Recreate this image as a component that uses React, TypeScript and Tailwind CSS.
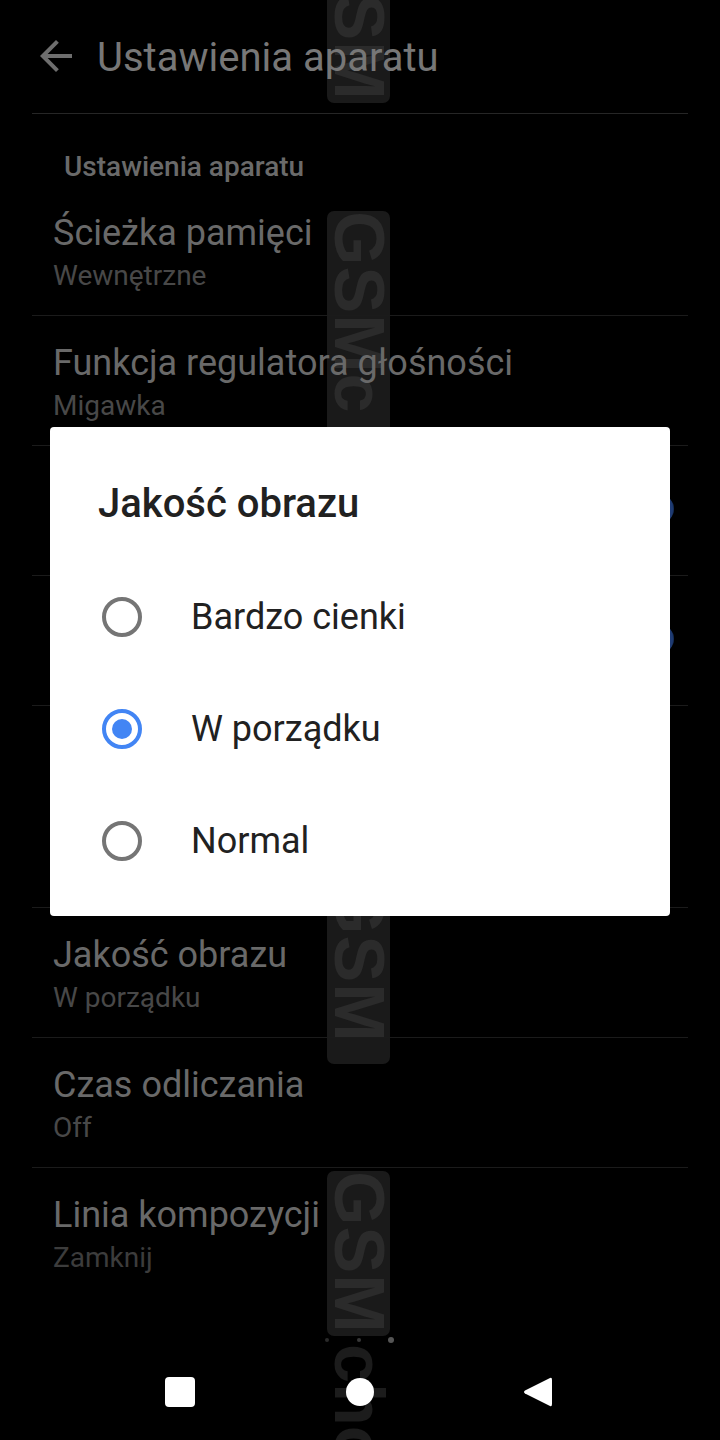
import { useState } from "react";

type Item = { title: string; sub: string; toggle?: boolean; faded?: boolean };

const topRows: Item[] = [
  { title: "Ścieżka pamięci", sub: "Wewnętrzne" },
  { title: "Funkcja regulatora głośności", sub: "Migawka" },
  { title: "Dźwięk migawki", sub: "Włączony", toggle: true },
  { title: "Lokalizacja", sub: "Zapisz lokalizację zdjęć", toggle: true },
];

const bottomRows: Item[] = [
  { title: "Jakość obrazu", sub: "W porządku" },
  { title: "Czas odliczania", sub: "Off" },
  { title: "Linia kompozycji", sub: "Zamknij", faded: true },
];

const options = ["Bardzo cienki", "W porządku", "Normal"];

function Row({ item, last }: { item: Item; last?: boolean }) {
  return (
    <div
      className={`h-[130px] shrink-0 mx-[32px] pl-[21px] pt-[27px] flex items-start justify-between ${
        last ? "" : "border-b border-[#1b1b1b]"
      }`}
    >
      <div className="flex flex-col">
        <div className="text-[36px] leading-[40px] text-[#696969]">{item.title}</div>
        <div
          className={`mt-[7px] text-[28px] leading-[32px] ${
            item.faded ? "text-[#3c3c3c]" : "text-[#484848]"
          }`}
        >
          {item.sub}
        </div>
      </div>
      {item.toggle && (
        <div className="relative mt-[22px] mr-[14px] w-[52px] h-[28px] rounded-full bg-[#17305c]">
          <div className="absolute right-[1px] top-[-4px] w-[36px] h-[36px] rounded-full bg-[#1f3b73]" />
        </div>
      )}
    </div>
  );
}

function Stamp({ top, height, text }: { top: number; height: number; text: string }) {
  return (
    <div
      className="absolute left-[327px] w-[63px] rounded-[7px] bg-[#1a1a1a] flex justify-center overflow-hidden"
      style={{ top, height }}
    >
      <span
        className="[writing-mode:vertical-rl] text-[70px] leading-[63px] font-bold text-[#2b2b2b] tracking-[1px]"
        style={{ fontFamily: '"Liberation Sans", Arial, sans-serif' }}
      >
        {text}
      </span>
    </div>
  );
}

function Radio({ checked }: { checked: boolean }) {
  return (
    <div
      className={`w-[40px] h-[40px] rounded-full border-[4px] flex items-center justify-center ${
        checked ? "border-[#4285f4]" : "border-[#757575]"
      }`}
    >
      {checked && <div className="w-[20px] h-[20px] rounded-full bg-[#4285f4]" />}
    </div>
  );
}

export default function App() {
  const [selected, setSelected] = useState(1);

  return (
    <div
      className="relative w-full h-[1440px] bg-black overflow-hidden flex flex-col"
      style={{ fontFamily: 'Roboto, "Noto Sans", sans-serif' }}
    >
      {/* watermark */}
      <Stamp top={-62} height={165} text="GSM" />
      <Stamp top={211} height={230} text="GSMc" />
      <Stamp top={880} height={184} text="GSM" />
      <Stamp top={1171} height={165} text="GSM" />
      <div className="absolute left-[325px] top-[1338px] w-[4px] h-[4px] rounded-full bg-[#2a2a2a]" />
      <div className="absolute left-[357px] top-[1338px] w-[4px] h-[4px] rounded-full bg-[#383838]" />
      <div className="absolute left-[388px] top-[1337px] w-[6px] h-[6px] rounded-full bg-[#555]" />
      <div className="absolute left-[327px] top-[1344px] w-[63px] flex justify-center">
        <span
          className="[writing-mode:vertical-rl] text-[70px] leading-[63px] font-bold text-[#1c1c1c]"
          style={{ fontFamily: '"Liberation Sans", Arial, sans-serif' }}
        >
          cho
        </span>
      </div>

      {/* settings page (dimmed) */}
      <div className="relative flex flex-col flex-1">
        <div className="h-[114px] shrink-0 mx-[32px] border-b border-[#262626] flex items-start">
          <svg width="48" height="48" viewBox="0 0 24 24" className="mt-[32px] shrink-0">
            <path
              fill="#6e6e6e"
              d="M20 11H7.83l5.59-5.59L12 4l-8 8 8 8 1.41-1.41L7.83 13H20v-2z"
            />
          </svg>
          <div className="ml-[17px] mt-[34px] text-[40px] leading-[48px] text-[#777777]">
            Ustawienia aparatu
          </div>
        </div>
        <div className="h-[72px] shrink-0 pt-[37px] pl-[64px] text-[28px] leading-[32px] font-medium text-[#6a6a6a]">
          Ustawienia aparatu
        </div>
        {topRows.map((r) => (
          <Row key={r.title} item={r} />
        ))}
        <div className="h-[202px] shrink-0 mx-[32px] border-b border-[#1b1b1b]" />
        {bottomRows.map((r, i) => (
          <Row key={r.title} item={r} last={i === bottomRows.length - 1} />
        ))}
      </div>

      {/* navigation bar */}
      <div className="relative h-[96px] shrink-0 flex items-center">
        <div className="ml-[165px] w-[30px] h-[30px] rounded-[4px] bg-white" />
        <div className="ml-[151px] w-[28px] h-[28px] rounded-full bg-white" />
        <svg className="ml-[147px]" width="34" height="36" viewBox="0 0 34 36">
          <path
            d="M29 4 Q31 3 31 6 L31 30 Q31 33 29 32 L4 19.5 Q2 18 4 16.5 Z"
            fill="#ffffff"
          />
        </svg>
      </div>

      {/* dialog */}
      <div className="absolute left-[50px] top-[427px] w-[620px] h-[489px] bg-white rounded-[4px] pt-[53px]">
        <div className="pl-[48px] text-[40px] leading-[48px] font-medium text-[#212121]">
          Jakość obrazu
        </div>
        <div className="mt-[33px] flex flex-col">
          {options.map((o, i) => (
            <button
              key={o}
              onClick={() => setSelected(i)}
              className="h-[112px] flex items-center pl-[52px] text-left"
            >
              <Radio checked={selected === i} />
              <span className="ml-[49px] text-[36px] leading-[40px] text-[#212121]">{o}</span>
            </button>
          ))}
        </div>
      </div>
    </div>
  );
}
